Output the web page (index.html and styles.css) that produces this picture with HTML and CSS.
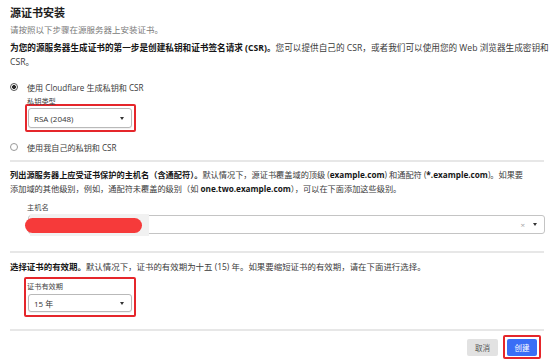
FILE: index.html
```html
<!DOCTYPE html>
<html lang="zh-CN">
<head>
<meta charset="utf-8">
<title>源证书安装</title>
<link rel="stylesheet" href="styles.css">
</head>
<body>
<div class="page">
  <h1 class="title">源证书安装</h1>
  <p class="subtitle">请按照以下步骤在源服务器上安装证书。</p>
  <p class="para para-first">
    <span class="line"><b>为您的源服务器生成证书的第一步是创建私钥和证书签名请求 (CSR)。</b>您可以提供自己的 CSR，或者我们可以使用您的 Web 浏览器生成密钥和</span>
    <span class="line">CSR。</span>
  </p>

  <div class="radio-row first-radio"><span class="radio checked"></span><span>使用 Cloudflare 生成私钥和 CSR</span></div>
  <div class="field-label key-label">私钥类型</div>
  <div class="highlight hl-key">
    <div class="select sel-key"><span>RSA (2048)</span><span class="caret"></span></div>
  </div>
  <div class="radio-row second-radio"><span class="radio"></span><span>使用我自己的私钥和 CSR</span></div>

  <div class="divider d1"></div>

  <p class="para para-host">
    <span class="line"><b>列出源服务器上应受证书保护的主机名（含通配符）。</b>默认情况下，源证书覆盖域的顶级 (<b>example.com</b>) 和通配符 (<b>*.example.com</b>)。如果要</span>
    <span class="line">添加域的其他级别，例如，通配符未覆盖的级别（如 <b>one.two.example.com</b>），可以在下面添加这些级别。</span>
  </p>
  <div class="field-label host-label">主机名</div>
  <div class="host-input">
    <span class="smudge"></span>
    <span class="redact"></span>
    <span class="input-icons"><span class="clear">×</span><span class="caret"></span></span>
  </div>

  <div class="divider d2"></div>

  <p class="para para-dur">
    <span class="line"><b>选择证书的有效期。</b>默认情况下，证书的有效期为十五 (15) 年。如果要缩短证书的有效期，请在下面进行选择。</span>
  </p>
  <div class="highlight hl-dur">
    <div class="field-label dur-label">证书有效期</div>
    <div class="select sel-dur"><span>15 年</span><span class="caret"></span></div>
  </div>

  <div class="divider d3"></div>

  <div class="footer">
    <button class="btn btn-cancel">取消</button>
    <div class="highlight hl-create"><button class="btn btn-create">创建</button></div>
  </div>
</div>
</body>
</html>
```
FILE: styles.css
```css
* { box-sizing: border-box; }
html, body { margin: 0; padding: 0; background: #ffffff; }
body {
  font-family: "Open Sans", "Noto Sans CJK SC", sans-serif;
  color: #333333;
}
.page {
  width: 554px;
  padding: 6px 10px 0 10px;
}
.title {
  margin: 0;
  font-size: 11px;
  line-height: 14px;
  font-weight: 700;
  color: #1e1e1e;
}
.subtitle {
  margin: 4px 0 0;
  font-size: 8.5px;
  line-height: 12px;
  color: #7a7a7a;
}
.para {
  margin: 0;
  font-size: 8.2px;
  color: #3a3a3a;
}
.para b { font-weight: 700; color: #161616; }
.line { display: block; white-space: nowrap; }
.para-first { margin-top: 5px; line-height: 14px; font-size: 8.65px; }
.para-host { margin-top: 6px; line-height: 13.5px; }
.para-dur { margin-top: 7px; line-height: 13.5px; font-size: 8.45px; }

.radio-row {
  display: flex;
  align-items: center;
  gap: 9px;
  height: 14px;
  font-size: 8.1px;
  color: #3a3a3a;
  white-space: nowrap;
}
.first-radio { margin-top: 11px; }
.second-radio { margin-top: 8px; }
.radio {
  width: 8px;
  height: 8px;
  border: 1px solid #9a9a9a;
  border-radius: 50%;
  flex: none;
  background: #fff;
}
.radio.checked {
  border-color: #555;
  background: radial-gradient(circle, #2a2a2a 0 1.8px, #ffffff 2.2px);
}

.field-label {
  font-size: 7.2px;
  line-height: 10px;
  color: #444;
  white-space: nowrap;
}
.key-label { margin: 2px 0 0 17px; }
.host-label { margin: 7px 0 0 17px; }
.dur-label { line-height: 12px; margin-left: -1px; }

.highlight {
  border: 2px solid #e5262b;
  border-radius: 2px;
  width: fit-content;
}
.hl-key { margin: -2px 0 0 15px; padding: 2px 2px 2px 1px; }
.hl-dur { margin: 3.5px 0 0 14px; padding: 1px 2px 3px 2px; }

.select {
  width: 104px;
  border: 1px solid #b9b9b9;
  border-radius: 3px;
  display: flex;
  align-items: center;
  justify-content: space-between;
  padding: 0 7px 0 5px;
  font-size: 8px;
  color: #333;
  background: #fff;
  box-shadow: 0 1px 1px rgba(0,0,0,0.06);
  white-space: nowrap;
}
.sel-key { height: 20px; }
.sel-dur { height: 18px; margin-top: 2px; }
.caret {
  width: 0;
  height: 0;
  border-left: 2.5px solid transparent;
  border-right: 2.5px solid transparent;
  border-top: 3px solid #333;
}

.divider {
  height: 2px;
  background: #e7e7e7;
}
.d1 { margin-top: 6px; }
.d2 { margin-top: 17px; }
.d3 { margin-top: 12px; }

.host-input {
  position: relative;
  margin: 3px -1px 0 18px;
  height: 19px;
  border: 1px solid #c4c4c4;
  border-radius: 3px;
  display: flex;
  align-items: center;
  justify-content: flex-end;
  padding-right: 7px;
}
.input-icons {
  display: flex;
  align-items: center;
  gap: 8px;
}
.clear {
  font-size: 8px;
  line-height: 8px;
  color: #a5a5a5;
}
.smudge {
  position: absolute;
  left: 1px;
  top: -2px;
  width: 119px;
  height: 22px;
  background: #f1f1f1;
}
.redact {
  position: absolute;
  left: -4px;
  top: 2px;
  width: 117px;
  height: 15px;
  border-radius: 8px;
  background: #f63a3a;
}

.footer {
  display: flex;
  justify-content: flex-end;
  align-items: center;
  margin-top: 4px;
  padding-right: 3px;
}
.btn {
  border: 0;
  border-radius: 2px;
  height: 17px;
  padding: 0;
  font-family: "Noto Sans CJK SC", "Open Sans", sans-serif;
  font-size: 7.5px;
  line-height: 17px;
}
.btn-cancel {
  width: 31px;
  background: #e2e2e2;
  color: #555;
  margin-right: 5px;
}
.hl-create { padding: 1.5px 2px; }
.btn-create {
  display: block;
  width: 30px;
  background: #3a6ef6;
  color: #ffffff;
}
```
